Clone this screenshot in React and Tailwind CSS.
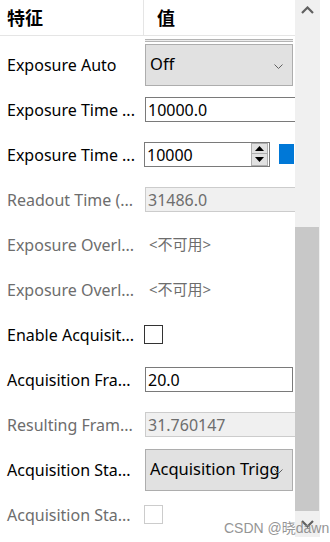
import React from "react";

const FONT = { fontFamily: '"Segoe UI","Noto Sans","Noto Sans CJK SC",sans-serif' };

function Chevron({ className }) {
  return (
    <svg className={className} width="9" height="5" viewBox="0 0 9 5" fill="none">
      <path d="M0.5 0.5 L4.5 4.5 L8.5 0.5" stroke="#606060" strokeWidth="1" />
    </svg>
  );
}

function Label({ children, disabled }) {
  return (
    <div
      className={`w-[145px] shrink-0 pl-[7px] whitespace-nowrap overflow-hidden text-[16px] ${
        disabled ? "text-[#6d6d6d]" : "text-black"
      }`}
    >
      {children}
    </div>
  );
}

function Row({ children }) {
  return <div className="h-[45px] flex items-center shrink-0">{children}</div>;
}

function Combo({ text }) {
  return (
    <div className="relative w-[148px] h-[42px] border border-[#adadad] bg-[#e1e1e1] flex items-center">
      <div className="whitespace-nowrap pl-[4px] text-[16.5px] text-black">{text}</div>
      <Chevron className="absolute right-[9px] top-[19px]" />
    </div>
  );
}

function TextBox({ text, width = "w-[148px]", clipRight }) {
  return (
    <div
      className={`${width} h-[25px] border border-[#7a7a7a] bg-white flex items-center pl-[2px] text-[16px] text-black ${
        clipRight ? "border-r-0" : ""
      }`}
    >
      {text}
    </div>
  );
}

function Disabled({ text }) {
  return (
    <div className="w-[150px] h-[25px] border border-r-0 border-[#cccccc] bg-[#f0f0f0] flex items-center pl-[2px] text-[16px] text-[#6d6d6d]">
      {text}
    </div>
  );
}

function Unavailable() {
  return <div className="pl-[4px] text-[15px] text-[#6d6d6d]">&lt;不可用&gt;</div>;
}

function CheckBox({ disabled }) {
  return (
    <div
      className={`w-[19px] h-[19px] border bg-white ${
        disabled ? "border-[#cccccc]" : "border-[#333333]"
      }`}
    />
  );
}

export default function App() {
  return (
    <div className="w-[330px] h-[542px] bg-white relative overflow-hidden flex" style={FONT}>
      {/* main grid */}
      <div className="w-[295px] h-[542px] flex flex-col overflow-hidden shrink-0">
        {/* header */}
        <div className="h-[36px] flex border-b border-[#e5e5e5] shrink-0">
          <div
            className="w-[144px] border-r border-[#e5e5e5] pl-[7px] flex items-center text-[18px] font-bold text-black"
            style={{ fontFamily: '"Noto Sans CJK SC",sans-serif' }}
          >
            特征
          </div>
          <div
            className="pl-[13px] flex items-center text-[18px] font-bold text-black"
            style={{ fontFamily: '"Noto Sans CJK SC",sans-serif' }}
          >
            值
          </div>
        </div>
        {/* sliver of previous row control */}
        <div className="h-[6px] pl-[145px] pr-[2px] shrink-0">
          <div className="mt-[3px] h-[3px] border-t border-b border-[#b4b4b4] bg-[#ececec]" />
        </div>

        <Row>
          <Label>Exposure Auto</Label>
          <Combo text="Off" />
        </Row>
        <Row>
          <Label>Exposure Time ...</Label>
          <TextBox text="10000.0" width="w-[152px]" clipRight />
        </Row>
        <Row>
          <Label>Exposure Time ...</Label>
          <div className="-ml-[1px] w-[126px] h-[25px] border border-[#7a7a7a] bg-white flex items-center pl-[2px] text-[16px] text-black">
            <div className="flex-1">10000</div>
            <div className="w-[17px] h-[23px] flex flex-col mr-[1px]">
              <div className="h-[11px] border border-[#adadad] bg-[#e1e1e1] flex items-center justify-center">
                <svg width="9" height="5" viewBox="0 0 9 5">
                  <path d="M0 5 L4.5 0 L9 5 Z" fill="#000" />
                </svg>
              </div>
              <div className="h-[12px] border border-t-0 border-[#adadad] bg-[#e1e1e1] flex items-center justify-center">
                <svg width="9" height="5" viewBox="0 0 9 5">
                  <path d="M0 0 L9 0 L4.5 5 Z" fill="#000" />
                </svg>
              </div>
            </div>
          </div>
          <div className="ml-[9px] w-[15px] h-[20px] bg-[#0078d7] -mt-[2px]" />
        </Row>
        <Row>
          <Label disabled>Readout Time (...</Label>
          <Disabled text="31486.0" />
        </Row>
        <Row>
          <Label disabled>Exposure Overl...</Label>
          <Unavailable />
        </Row>
        <Row>
          <Label disabled>Exposure Overl...</Label>
          <Unavailable />
        </Row>
        <Row>
          <Label>Enable Acquisit...</Label>
          <div className="-ml-[1px]">
            <CheckBox />
          </div>
        </Row>
        <Row>
          <Label>Acquisition Fra...</Label>
          <TextBox text="20.0" />
        </Row>
        <Row>
          <Label disabled>Resulting Fram...</Label>
          <Disabled text="31.760147" />
        </Row>
        <Row>
          <Label>Acquisition Sta...</Label>
          <Combo text="Acquisition Trigg" />
        </Row>
        <Row>
          <Label disabled>Acquisition Sta...</Label>
          <div className="-ml-[1px]">
            <CheckBox disabled />
          </div>
        </Row>
      </div>

      {/* scrollbar */}
      <div className="w-[25px] h-[537px] bg-[#f0f0f0] flex flex-col shrink-0">
        <div className="h-[20px] flex items-center justify-center">
          <svg width="13" height="8" viewBox="0 0 13 8">
            <path d="M1 7 L6.5 1.5 L12 7" stroke="#606060" strokeWidth="2.2" fill="none" />
          </svg>
        </div>
        <div className="h-[207px]" />
        <div className="h-[284px] w-[24px] bg-[#c8c8c8]" />
        <div className="flex-1 flex items-center justify-center">
          <svg width="13" height="8" viewBox="0 0 13 8">
            <path d="M1 1 L6.5 6.5 L12 1" stroke="#606060" strokeWidth="2.2" fill="none" />
          </svg>
        </div>
      </div>

      {/* watermark */}
      <div
        className="absolute left-[224px] top-[518px] text-[14px] text-[#8a8a8a] whitespace-nowrap opacity-90"
        style={{ fontFamily: '"Liberation Sans","Noto Sans CJK SC",sans-serif' }}
      >
        CSDN @晓dawn
      </div>
    </div>
  );
}
